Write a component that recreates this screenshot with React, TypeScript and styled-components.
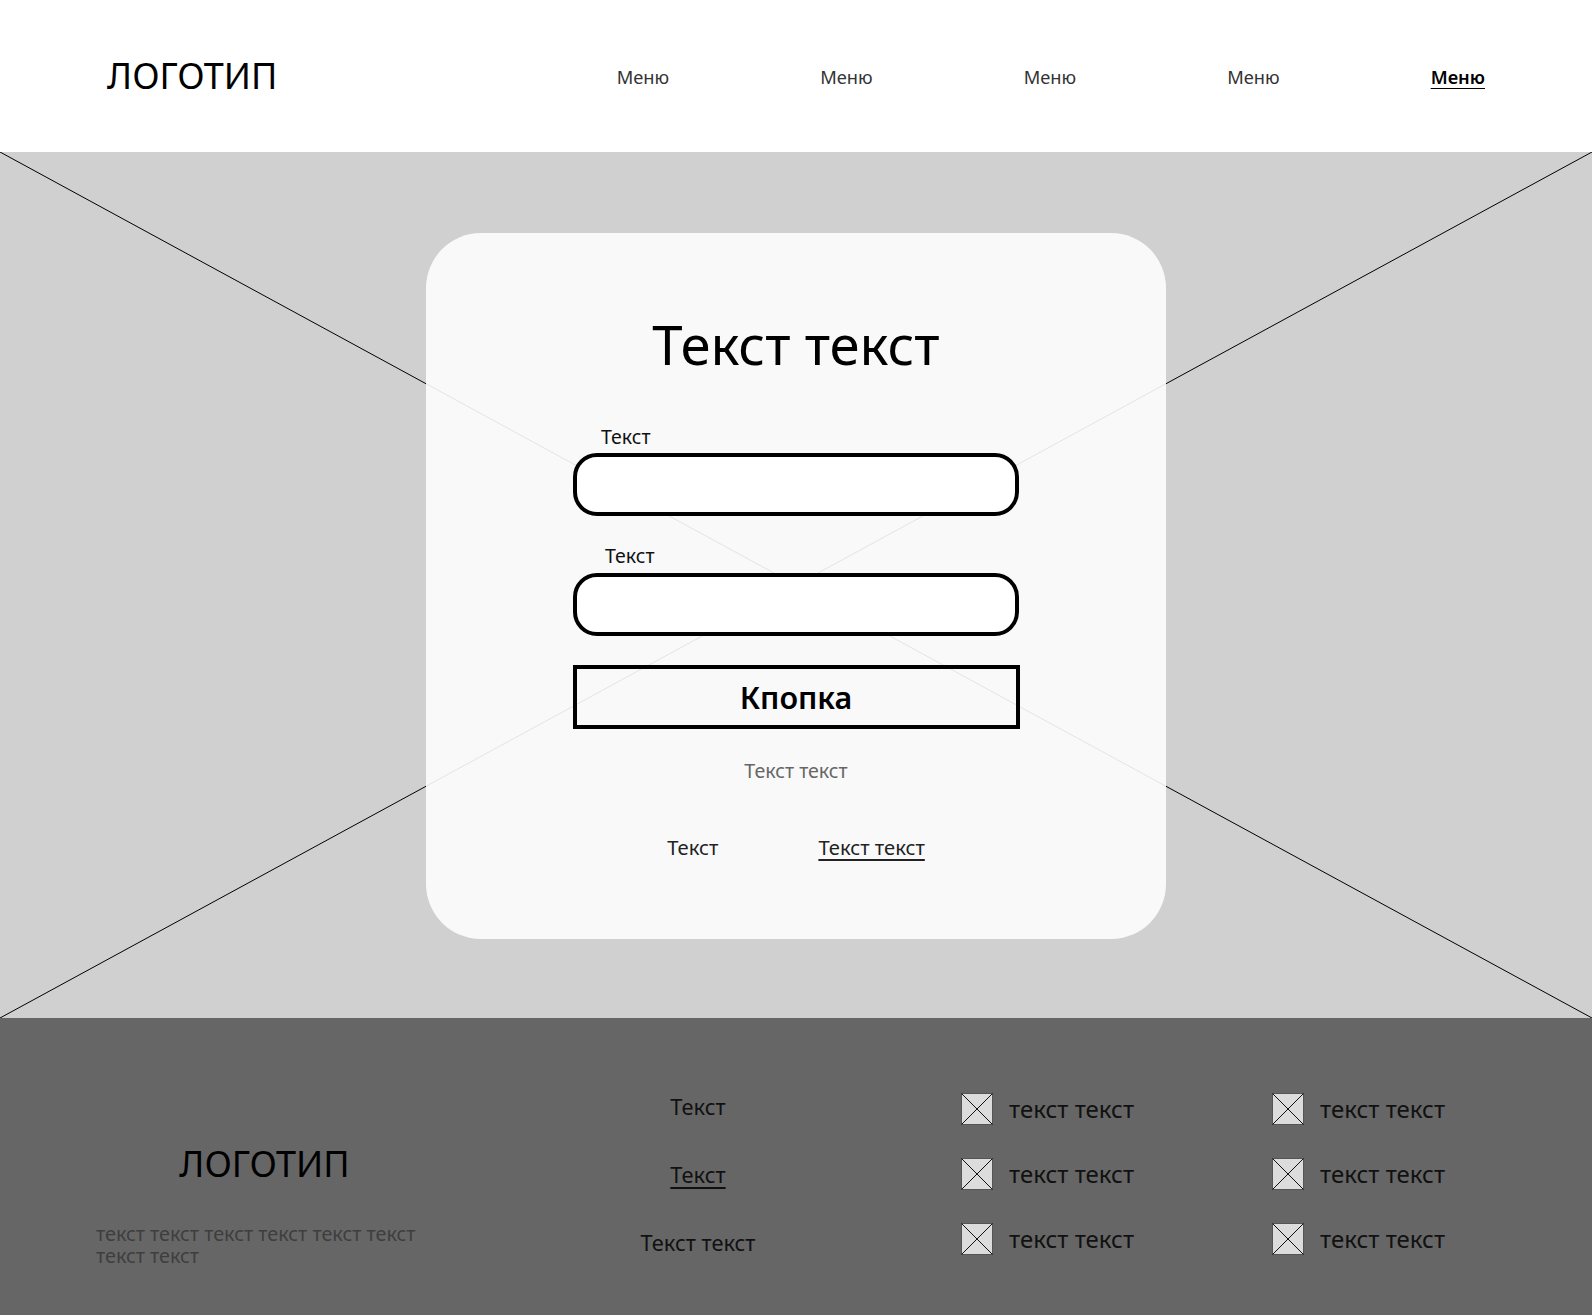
import { FC } from 'react';
import styled, { createGlobalStyle } from 'styled-components';

const GlobalStyle = createGlobalStyle`
  body {
    margin: 0;
    font-family: "Noto Sans", "Open Sans", sans-serif;
    color: #000;
    background: #fff;
  }
  * { box-sizing: border-box; }
`;

const Page = styled.div`
  width: 1592px;
  display: flex;
  flex-direction: column;
`;

const Header = styled.header`
  height: 152px;
  padding: 0 107px;
  display: flex;
  align-items: center;
  justify-content: space-between;
  background: #fff;
`;

const Logo = styled.div<{ $center?: boolean }>`
  font-size: 36px;
  line-height: 1;
  color: #000;
  text-align: ${(p) => (p.$center ? 'center' : 'left')};
`;

const Nav = styled.nav`
  display: flex;
  align-items: center;
  gap: 151px;
  margin-top: 2px;
`;

const MenuItem = styled.a<{ $active?: boolean }>`
  font-size: 18.3px;
  line-height: 1;
  color: ${(p) => (p.$active ? '#000' : '#333')};
  font-weight: ${(p) => (p.$active ? 600 : 400)};
  text-decoration: ${(p) => (p.$active ? 'underline' : 'none')};
  text-underline-offset: 4px;
  text-decoration-thickness: 1px;
  cursor: pointer;
`;

const Hero = styled.section`
  position: relative;
  height: 866px;
  background: #d0d0d0;
  display: flex;
  justify-content: center;
  padding-top: 81px;
`;

const Cross = styled.svg`
  position: absolute;
  inset: 0;
  width: 100%;
  height: 100%;
`;

const Card = styled.div`
  position: relative;
  width: 740px;
  height: 706px;
  border-radius: 55px;
  background: rgba(253, 253, 253, 0.9);
  padding-top: 84px;
  display: flex;
  flex-direction: column;
  align-items: center;
`;

const Title = styled.h1`
  margin: 0;
  font-size: 54.5px;
  font-weight: 400;
  line-height: 1;
  color: #000;
`;

const Field = styled.div<{ $top: number }>`
  width: 446px;
  margin-top: ${(p) => p.$top}px;
  display: flex;
  flex-direction: column;
  gap: 7px;
`;

const Label = styled.label<{ $indent: number }>`
  font-size: 19.5px;
  line-height: 1;
  color: #111;
  padding-left: ${(p) => p.$indent}px;
`;

const Input = styled.input`
  width: 446px;
  height: 63px;
  border: 4px solid #000;
  border-radius: 24px;
  background: #fff;
  outline: none;
  padding: 0 20px;
  font: inherit;
`;

const Button = styled.button`
  width: 447px;
  height: 64px;
  margin-top: 29px;
  border: 4px solid #000;
  background: transparent;
  font-family: inherit;
  font-size: 30.5px;
  font-weight: 600;
  color: #000;
  cursor: pointer;
`;

const Note = styled.div`
  margin-top: 32px;
  font-size: 19.6px;
  line-height: 1;
  color: #666;
`;

const Links = styled.div`
  margin-top: 57px;
  display: flex;
  gap: 100px;
`;

const CardLink = styled.a<{ $underline?: boolean }>`
  font-size: 20.2px;
  line-height: 1;
  color: #222;
  text-decoration: ${(p) => (p.$underline ? 'underline' : 'none')};
  text-underline-offset: 4px;
  cursor: pointer;
`;

const Footer = styled.footer`
  height: 297px;
  background: #666;
  padding: 75px 0 0 96px;
  display: flex;
  align-items: flex-start;
`;

const FooterCol = styled.div<{ $width: number; $left?: number; $top?: number }>`
  width: ${(p) => p.$width}px;
  margin-left: ${(p) => p.$left ?? 0}px;
  margin-top: ${(p) => p.$top ?? 0}px;
  display: flex;
  flex-direction: column;
`;

const About = styled.p`
  margin: 41px 0 0;
  width: 345px;
  font-size: 19.8px;
  line-height: 22px;
  color: #3e3e3e;
`;

const FooterLink = styled.a<{ $underline?: boolean }>`
  display: block;
  text-align: center;
  font-size: 21.8px;
  line-height: 28px;
  color: #111;
  text-decoration: ${(p) => (p.$underline ? 'underline' : 'none')};
  text-underline-offset: 4px;
  & + & {
    margin-top: 40px;
  }
`;

const Contact = styled.div`
  display: flex;
  align-items: center;
  gap: 16px;
  height: 32px;
  & + & {
    margin-top: 33px;
  }
`;

const ContactText = styled.span`
  font-size: 24px;
  line-height: 1;
  color: #111;
`;

const ImageStub: FC = () => (
  <svg width="32" height="32" viewBox="0 0 32 32">
    <rect x="0.5" y="0.5" width="31" height="31" fill="#dcdcdc" stroke="#555" />
    <line x1="0.5" y1="0.5" x2="31.5" y2="31.5" stroke="#111" strokeWidth="1" />
    <line x1="31.5" y1="0.5" x2="0.5" y2="31.5" stroke="#111" strokeWidth="1" />
  </svg>
);

const menu = ['Меню', 'Меню', 'Меню', 'Меню', 'Меню'];

const ContactList: FC = () => (
  <>
    {[0, 1, 2].map((i) => (
      <Contact key={i}>
        <ImageStub />
        <ContactText>текст текст</ContactText>
      </Contact>
    ))}
  </>
);

const App: FC = () => {
  return (
    <Page>
      <GlobalStyle />
      <Header>
        <Logo>ЛОГОТИП</Logo>
        <Nav>
          {menu.map((m, i) => (
            <MenuItem key={i} $active={i === menu.length - 1}>
              {m}
            </MenuItem>
          ))}
        </Nav>
      </Header>

      <Hero>
        <Cross viewBox="0 0 1592 866" preserveAspectRatio="none">
          <line x1="0" y1="0" x2="1592" y2="866" stroke="#000" strokeWidth="1" vectorEffect="non-scaling-stroke" />
          <line x1="1592" y1="0" x2="0" y2="866" stroke="#000" strokeWidth="1" vectorEffect="non-scaling-stroke" />
        </Cross>
        <Card>
          <Title>Текст текст</Title>
          <Field $top={55}>
            <Label $indent={28}>Текст</Label>
            <Input />
          </Field>
          <Field $top={30}>
            <Label $indent={32}>Текст</Label>
            <Input />
          </Field>
          <Button>Кпопка</Button>
          <Note>Текст текст</Note>
          <Links>
            <CardLink>Текст</CardLink>
            <CardLink $underline>Текст текст</CardLink>
          </Links>
        </Card>
      </Hero>

      <Footer>
        <FooterCol $width={337} $top={53}>
          <Logo $center>ЛОГОТИП</Logo>
          <About>текст текст текст текст текст текст текст текст</About>
        </FooterCol>
        <FooterCol $width={240} $left={145}>
          <FooterLink>Текст</FooterLink>
          <FooterLink $underline>Текст</FooterLink>
          <FooterLink>Текст текст</FooterLink>
        </FooterCol>
        <FooterCol $width={311} $left={143}>
          <ContactList />
        </FooterCol>
        <FooterCol $width={250}>
          <ContactList />
        </FooterCol>
      </Footer>
    </Page>
  );
};

export default App;
